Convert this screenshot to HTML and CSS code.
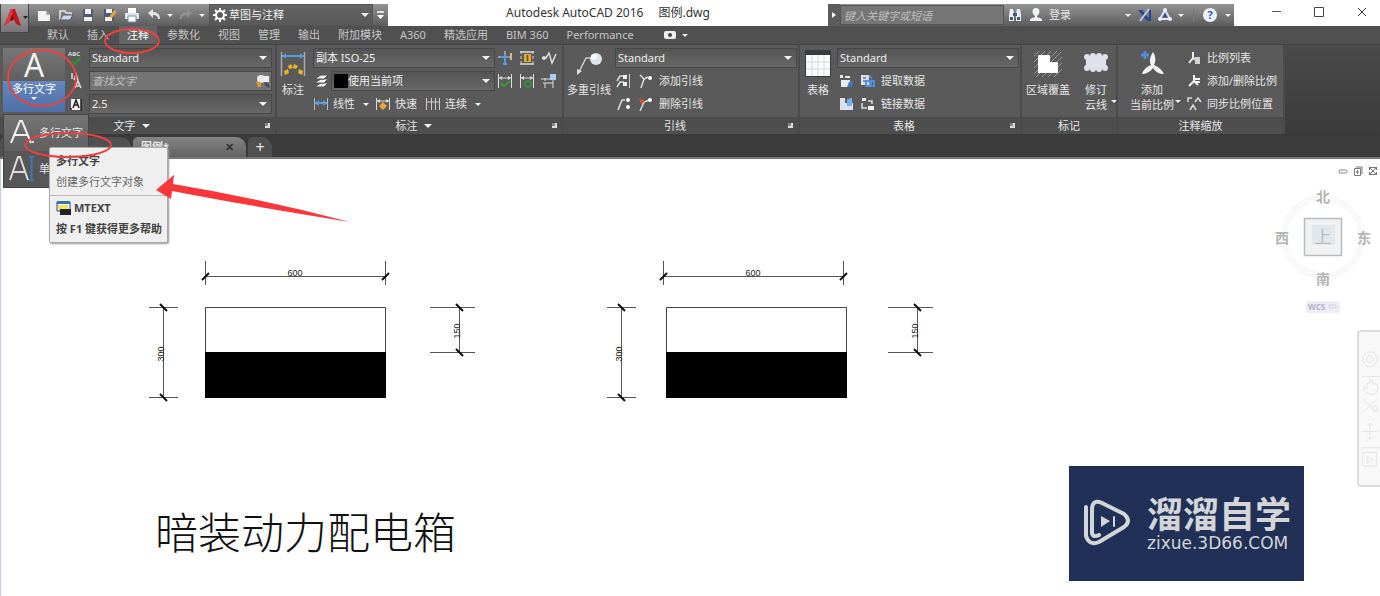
FILE: index.html
```html
<!DOCTYPE html>
<html lang="zh-CN">
<head>
<meta charset="utf-8">
<title>Autodesk AutoCAD 2016 图例.dwg</title>
<link rel="stylesheet" href="styles.css">
</head>
<body>
<div class="app">
  <header class="titlebar">
    <button class="app-button" aria-label="应用程序菜单">
      <svg width="28" height="30" viewBox="0 0 28 30"><path d="M3 22 10 5h4l6 17-5-2-2-4-6 2z" fill="#c4161c"/><path d="M3 22 10 5h2l-1 9-2 4z" fill="#e5343a"/><path d="M11 10l2 5-4 2z" fill="#7d0d12"/><path d="M22 12h5l-2.500 3z" fill="#222"/></svg>
    </button>
    <div class="quick">
      <button class="qi" aria-label="新建"><svg width="16" height="16" viewBox="0 0 16 16"><path d="M2 4h8l4 4v6H2z" fill="#f4f4f4"/><path d="M10 4v4h4z" fill="#aaa"/></svg></button>
      <button class="qi" aria-label="打开"><svg width="16" height="16" viewBox="0 0 16 16"><path d="M2 13V4h5l1 2h5v2" fill="none" stroke="#e8e8e8" stroke-width="1.500"/><path d="M2 13l3-5h10l-3 5z" fill="#cfd8e2" stroke="#46597a"/></svg></button>
      <button class="qi" aria-label="保存"><svg width="16" height="16" viewBox="0 0 16 16"><path d="M3 2h10v12H3z" fill="#4d5c74"/><path d="M5 2h6v5H5zM4 10h8v4H4z" fill="#f2f2f2"/></svg></button>
      <button class="qi" aria-label="另存为"><svg width="16" height="16" viewBox="0 0 16 16"><path d="M2 2h10v12H2z" fill="#4d5c74"/><path d="M4 2h6v4H4zM3 10h7v4H3z" fill="#f2f2f2"/><path d="M7 10l5-7 3 2-5 6z" fill="#e2a23a"/></svg></button>
      <button class="qi" aria-label="打印"><svg width="16" height="16" viewBox="0 0 16 16"><path d="M4 1h8v5H4z" fill="#fff"/><path d="M1 6h14v6H1z" fill="#dfe5ec"/><path d="M4 9h8v6H4z" fill="#fff" stroke="#7790ac"/></svg></button>
      <button class="qi" aria-label="放弃"><svg width="16" height="16" viewBox="0 0 16 16"><path d="M2 6l5-4v3c4 0 7 2 7 7h-2c0-3-2-4-5-4v3z" fill="#e4e4e4"/></svg></button>
      <i class="tri small"></i>
      <button class="qi" aria-label="重做"><svg width="16" height="16" viewBox="0 0 16 16"><path d="M14 6 9 2v3c-4 0-7 2-7 7h2c0-3 2-4 5-4v3z" fill="#909090"/></svg></button>
      <i class="tri small"></i>
    </div>
    <div class="workspace">
      <svg width="14" height="14" viewBox="0 0 14 14"><circle cx="7" cy="7" r="4" fill="none" stroke="#fff" stroke-width="2"/><path d="M7 0v3M7 11v3M0 7h3M11 7h3M2 2l2 2M10 10l2 2M12 2l-2 2M4 10l-2 2" stroke="#fff" stroke-width="2"/></svg>
      <select aria-label="工作空间"><option>草图与注释</option></select><i class="tri"></i>
    </div>
    <button class="customize" aria-label="自定义快速访问工具栏"><svg width="9" height="9" viewBox="0 0 9 9"><path d="M1 1h7" stroke="#fff" stroke-width="1.500"/><path d="M1 4h7L4.500 8z" fill="#fff"/></svg></button>
    <h1 class="doc-title"><span>Autodesk AutoCAD 2016</span><span>图例.dwg</span></h1>
    <div class="info">
      <button class="info-toggle" aria-label="折叠"><i class="tri right"></i></button>
      <input type="search" aria-label="搜索" placeholder="键入关键字或短语">
      <button class="qi" aria-label="查找"><svg width="16" height="16" viewBox="0 0 16 16"><path d="M3 2h3l1 4v8H2V8zM10 2h3l1 6v6H9V6z" fill="#e8edf0"/><path d="M6 6h4v3H6z" fill="#46597a"/><path d="M3 10h3v3H3zM10 10h3v3h-3z" fill="#46597a"/></svg></button>
      <button class="login"><svg width="14" height="16" viewBox="0 0 14 16"><path d="M7 1c5 0 4 6 1 8v1l5 2v2H1v-2l5-2V9C3 7 2 1 7 1z" fill="#eef1f6"/></svg>登录</button>
      <div class="info-tools">
        <i class="tri small"></i>
        <button class="qi" aria-label="Exchange"><svg width="16" height="16" viewBox="0 0 16 16"><path d="M2 3h4l8 10h-4z" fill="#26478e"/><path d="M13 2l-9 12" stroke="#b8c9ee" stroke-width="2"/><path d="M14 3v10h-3" fill="none" stroke="#26478e" stroke-width="2"/></svg></button>
        <button class="qi" aria-label="A360"><svg width="16" height="16" viewBox="0 0 16 16"><path d="M8 3 3 12h10z" fill="none" stroke="#dce5f5" stroke-width="2"/><path d="M8 6l-2 4h4z" fill="#314f8d"/><circle cx="8" cy="3" r="2" fill="#e8effb"/><circle cx="3" cy="12" r="2" fill="#e8effb"/><circle cx="13" cy="12" r="2" fill="#e8effb"/></svg></button>
        <i class="tri small"></i><i class="bar"></i>
        <button class="help" aria-label="帮助">?</button>
        <i class="tri small"></i>
      </div>
    </div>
    <div class="window-controls">
      <button aria-label="最小化"><svg width="12" height="12" viewBox="0 0 12 12"><path d="M2 5.500h9" stroke="#555"/></svg></button>
      <button aria-label="最大化"><svg width="12" height="12" viewBox="0 0 12 12"><path d="M1.500 1.500h9v9h-9z" fill="none" stroke="#444"/></svg></button>
      <button aria-label="关闭"><svg width="12" height="12" viewBox="0 0 12 12"><path d="M2 2l8 8M10 2l-8 8" stroke="#333"/></svg></button>
    </div>
  </header>

  <nav class="tabs">
    <a href="#">默认</a><a href="#">插入</a><a href="#" class="active">注释</a><a href="#">参数化</a><a href="#">视图</a><a href="#">管理</a><a href="#">输出</a><a href="#">附加模块</a><a href="#">A360</a><a href="#">精选应用</a><a href="#">BIM 360</a><a href="#">Performance</a>
    <button class="tab-extra" aria-label="最小化功能区"><svg width="12" height="8" viewBox="0 0 12 8"><rect width="12" height="8" rx="2" fill="#eee"/><circle cx="6" cy="4" r="2" fill="#444"/></svg><i class="tri small"></i></button>
  </nav>

  <main class="ribbon">
    <section class="panel p-text">
      <div class="panel-body">
        <div class="split">
          <button class="split-main" aria-label="多行文字">A</button>
          <button class="split-drop">多行文字<i class="tri small"></i></button>
        </div>
        <div class="rows">
          <div class="row"><span class="icon-cell"><svg width="18" height="18" viewBox="0 0 18 18"><text x="1" y="7" class="abc">ABC</text><path d="M5 12l3 3 6-7" fill="none" stroke="#2c9130" stroke-width="2"/></svg></span>
            <div class="field"><select aria-label="文字样式"><option>Standard</option></select><i class="tri"></i></div></div>
          <div class="row"><span class="icon-cell"><svg width="18" height="18" viewBox="0 0 18 18"><path d="M7 8l2-6 2 6M8 6h3M8 16l3-7 3 7M9 14h4M5 1v6" fill="none" stroke="#ddd" stroke-width="1.500"/></svg></span>
            <div class="field find"><input aria-label="查找文字" placeholder="查找文字"><svg width="16" height="16" viewBox="0 0 16 16"><circle cx="6" cy="6" r="4" fill="#e9e9e9"/><path d="M1 9h5v5H3z" fill="#e19a35"/><path d="M9 3h5v6H9z" fill="#eee"/><path d="M10 10l4 4" stroke="#3f4d60" stroke-width="3"/></svg></div></div>
          <div class="row"><span class="icon-cell"><svg width="18" height="18" viewBox="0 0 18 18"><path d="M4 4h10v11H4z" fill="#f2f2f2"/><path d="M6 13l3-8 3 8M7 10h4M3 14h2M14 4v12" fill="none" stroke="#222" stroke-width="1.500"/></svg></span>
            <div class="field"><select aria-label="文字高度"><option>2.5</option></select><i class="tri"></i></div></div>
        </div>
      </div>
      <footer class="panel-title has-launch"><span>文字</span><i class="tri"></i><button class="launch" aria-label="文字设置"></button></footer>
    </section>

    <section class="panel p-dim">
      <div class="panel-body">
        <button class="big"><svg width="28" height="30" viewBox="0 0 28 30"><path d="M2.500 4v24M25.500 4v24" stroke="#aaa" stroke-width="1.500"/><path d="M3 8h22" stroke="#5a9be0" stroke-width="2"/><path d="M3 8l4-3v6zM25 8l-4-3v6z" fill="#5a9be0"/><g fill="#f0b429"><path d="M5 23l4-2 1 4-4 2zM9 18l3-2 2 4-4 1zM15 16l4 2-2 3-3-1zM20 21l4 2-1 4-4-2z"/></g></svg>标注</button>
        <div class="rows">
          <div class="row"><div class="field w-full"><select aria-label="标注样式"><option>副本 ISO-25</option></select><i class="tri"></i></div>
            <div class="trio">
              <button aria-label="打断"><svg width="16" height="16" viewBox="0 0 16 16"><path d="M1 7h14M8 1v5" stroke="#ddd"/><path d="M8 4v11M3 7h9M6 14h4" stroke="#5a9be0" stroke-width="2"/><path d="M14 3v7" stroke="#d8b98a" stroke-width="2"/></svg></button>
              <button aria-label="调整间距"><svg width="16" height="16" viewBox="0 0 16 16"><path d="M1 2h14M1 14h14" stroke="#ddd" stroke-width="1.500"/><path d="M2 1v14M14 1v14" stroke="#ccc" stroke-dasharray="3 2"/><path d="M5 4h7v8H5z" fill="#e3a82d"/><path d="M8.500 5v6" stroke="#553" stroke-width="1.500"/></svg></button>
              <button aria-label="折弯"><svg width="16" height="16" viewBox="0 0 16 16"><path d="M1 8h4l3-5 3 10 4-9" fill="none" stroke="#ddd" stroke-width="1.500"/><circle cx="3" cy="8" r="2" fill="#ddd"/></svg></button>
            </div></div>
          <div class="row"><span class="icon-cell"><svg width="16" height="16" viewBox="0 0 16 16"><g fill="#f2f2f2" stroke="#555"><path d="M2 13l5-3h7l-4 4H2z"/><path d="M2 9l5-3h7l-4 4H2z"/><path d="M2 5l5-3h7l-4 4H2z"/></g></svg></span>
            <div class="field swatch-field"><span class="swatch"></span><select aria-label="标注图层"><option>使用当前项</option></select><i class="tri"></i></div>
            <div class="trio">
              <button aria-label="检验"><svg width="16" height="16" viewBox="0 0 16 16"><path d="M1.500 1v14M14.500 1v14M2 5h12" stroke="#ddd"/><path d="M2 5l3-2v4zM14 5l-3-2v4z" fill="#ddd"/><path d="M4 10l3 3 6-5" fill="none" stroke="#3b9a30" stroke-width="2"/></svg></button>
              <button aria-label="更新"><svg width="16" height="16" viewBox="0 0 16 16"><path d="M1.500 1v14M14.500 1v14M2 5h12" stroke="#ddd"/><path d="M2 5l3-2v4zM14 5l-3-2v4z" fill="#ddd"/><circle cx="9" cy="11" r="3" fill="none" stroke="#3b8a30" stroke-width="2"/></svg></button>
              <button aria-label="重新关联"><svg width="16" height="16" viewBox="0 0 16 16"><path d="M0 6h9M2 10h10M4 5v3M12 7v8M4 10v5" stroke="#ddd"/><path d="M9 1h6v6H9z" fill="#aacdf5"/></svg></button>
            </div></div>
          <div class="row dims">
            <button><svg width="16" height="16" viewBox="0 0 16 16"><path d="M1.500 2v12M14.500 2v12" stroke="#bbb"/><path d="M2 7h12" stroke="#5a9be0" stroke-width="2"/><path d="M2 7l4-3v6zM14 7l-4-3v6z" fill="#5a9be0"/></svg>线性</button><i class="tri small"></i>
            <button class="quickdim"><svg width="16" height="16" viewBox="0 0 16 16"><path d="M1.500 2v12M14.500 2v12M2 5h12" stroke="#ddd"/><path d="M2 5l3-2v4zM14 5l-3-2v4z" fill="#ddd"/><path d="M8 6l4 4-4 4-4-4z" fill="#eda53a"/></svg>快速</button>
            <button class="contdim"><svg width="16" height="16" viewBox="0 0 16 16"><path d="M1.500 2v12M6.500 2v12M14.500 2v12M10.500 2v12M2 6h13" stroke="#ccc"/></svg>连续</button><i class="tri small"></i>
          </div>
        </div>
      </div>
      <footer class="panel-title has-launch"><span>标注</span><i class="tri"></i><button class="launch" aria-label="标注设置"></button></footer>
    </section>

    <section class="panel p-leader">
      <div class="panel-body">
        <button class="big"><svg width="32" height="30" viewBox="0 0 32 30"><path d="M6 24l7-14h8" fill="none" stroke="#ccc" stroke-width="1.500"/><path d="M4 27v-6l5 2z" fill="#ddd"/><circle cx="23" cy="11" r="6" fill="#dde4ee"/><circle cx="21" cy="9" r="3" fill="#f6f8fb"/></svg>多重引线</button>
        <div class="rows">
          <div class="row"><div class="field w-full"><select aria-label="多重引线样式"><option>Standard</option></select><i class="tri"></i></div></div>
          <div class="row pair"><button aria-label="对齐"><svg width="18" height="16" viewBox="0 0 18 16"><path d="M2 8l3-5h4M2 14l3-5h4" fill="none" stroke="#ddd" stroke-width="1.500"/><path d="M8 2h4v4H8zM8 9h4v4H8z" fill="#eee"/><path d="M14.500 1v14" stroke="#ccc"/></svg></button><button><svg width="16" height="16" viewBox="0 0 16 16"><path d="M3 15l3-9 4-2M2 2l4 4" fill="none" stroke="#ddd" stroke-width="1.500"/><circle cx="12" cy="5" r="2" fill="#fff"/></svg>添加引线</button></div>
          <div class="row pair"><button aria-label="合并"><svg width="18" height="16" viewBox="0 0 18 16"><path d="M3 14l4-10h3" fill="none" stroke="#ddd" stroke-width="1.500"/><circle cx="13" cy="4" r="2" fill="#fff"/><circle cx="13" cy="11" r="2" fill="#fff"/></svg></button><button><svg width="16" height="16" viewBox="0 0 16 16"><path d="M2 15l4-9 5-2" fill="none" stroke="#ddd" stroke-width="1.500"/><path d="M1 2l6 3-4 3z" fill="#d9532c"/><circle cx="12" cy="4" r="2" fill="#fff"/></svg>删除引线</button></div>
        </div>
      </div>
      <footer class="panel-title has-launch"><span>引线</span><button class="launch" aria-label="引线设置"></button></footer>
    </section>

    <section class="panel p-table">
      <div class="panel-body">
        <button class="big"><svg width="28" height="30" viewBox="0 0 28 30"><path d="M1 2h26v27H1z" fill="#383c42"/><path d="M2 7h24v21H2z" fill="#fafafa"/><path d="M2 14h24M2 21h24M8 7v21M14 7v21M20 7v21" stroke="#d5dae0"/></svg>表格</button>
        <div class="rows">
          <div class="row"><div class="field w-full"><select aria-label="表格样式"><option>Standard</option></select><i class="tri"></i></div></div>
          <div class="row pair"><button aria-label="下载"><svg width="18" height="16" viewBox="0 0 18 16"><path d="M3 2h3v3H3zM4 7h9v7H4zM8 3h5v2H8z" fill="#e6e9ed"/><path d="M10 14l2-5 4-1-1 6z" fill="#3c79c8"/></svg></button><button><svg width="16" height="16" viewBox="0 0 16 16"><path d="M1 2h8v10H1z" fill="#d8e0ea"/><path d="M3 5h3M3 8h3" stroke="#345"/><path d="M9 2l3 4M6 8h4v5H6zM11 8h3v5h-3z" fill="none" stroke="#4f8fe0" stroke-width="2"/></svg>提取数据</button></div>
          <div class="row pair"><button aria-label="上载"><svg width="18" height="16" viewBox="0 0 18 16"><path d="M3 2h5v5h8v7H3z" fill="#dce2e8"/><path d="M10 3l5-1v8h-5z" fill="#75adf0"/></svg></button><button><svg width="16" height="16" viewBox="0 0 16 16"><path d="M2 2h4v3H2zM8 10h6v4H8z" fill="#eee"/><path d="M2 7v5h5M8 5h4v3" fill="none" stroke="#ddd" stroke-width="1.500"/></svg>链接数据</button></div>
        </div>
      </div>
      <footer class="panel-title has-launch"><span>表格</span><button class="launch" aria-label="表格设置"></button></footer>
    </section>

    <section class="panel p-mark">
      <div class="panel-body">
        <button class="big"><svg width="32" height="30" viewBox="0 0 32 30"><path d="M2 8l5-5M2 14L13 3M2 20L19 3M2 26L25 3M4 29L29 4M10 29L30 9M16 29l14-14M22 29l8-8" stroke="#999"/><path d="M6 7h12v7h8v11H6z" fill="#fff"/></svg>区域覆盖</button>
        <button class="big"><svg width="28" height="30" viewBox="0 0 28 30"><g fill="#dfe2ea"><path d="M4 9h20v11H4z"/><circle cx="5" cy="9" r="3"/><circle cx="11" cy="8" r="3"/><circle cx="17" cy="8" r="3"/><circle cx="23" cy="9" r="3"/><circle cx="5" cy="20" r="3"/><circle cx="11" cy="21" r="3"/><circle cx="17" cy="21" r="3"/><circle cx="23" cy="20" r="3"/></g></svg>修订<br>云线<i class="tri small corner"></i></button>
      </div>
      <footer class="panel-title"><span>标记</span></footer>
    </section>

    <section class="panel p-scale">
      <div class="panel-body">
        <button class="big"><svg width="32" height="30" viewBox="0 0 32 30"><path d="M17 4c3 5 3 9 1 13 5 2 8 5 10 9-5 0-8-2-11-6-3 4-7 6-11 6 1-4 4-7 9-9-2-4-1-8 2-13z" fill="#f1f3f5"/><path d="M9 3v8M5 7h8" stroke="#4b8de0" stroke-width="3"/></svg>添加<br>当前比例<i class="tri small corner"></i></button>
        <div class="rows">
          <div class="row"><button><svg width="16" height="16" viewBox="0 0 16 16"><path d="M6 2v6l-4 5M6 8l4 3" fill="none" stroke="#eee" stroke-width="2"/><path d="M8 7h5v7H8z" fill="#cfd3d8"/></svg>比例列表</button></div>
          <div class="row"><button><svg width="16" height="16" viewBox="0 0 16 16"><path d="M7 2v6l-5 5M7 8l4 4" fill="none" stroke="#eee" stroke-width="2"/><path d="M8 6h5M8 9h5" stroke="#fff" stroke-width="2"/></svg>添加/删除比例</button></div>
          <div class="row"><button><svg width="16" height="16" viewBox="0 0 16 16"><path d="M1 6V2h4M8 6l3-4 3 4M3 14l3-5 3 5" fill="none" stroke="#ddd" stroke-width="1.500"/></svg>同步比例位置</button></div>
        </div>
      </div>
      <footer class="panel-title"><span>注释缩放</span></footer>
    </section>
    <div class="ribbon-rest"></div>
  </main>

  <div class="doc-tabs">
    <span class="doc-tab start"></span>
    <a href="#" class="doc-tab current"><span>图例*</span><span class="x">✕</span></a>
    <button class="doc-tab add" aria-label="新图形">+</button>
  </div>

  <div class="canvas">
    <svg class="drawing" width="960" height="160" viewBox="0 0 960 160" aria-label="配电箱图例">
      <defs>
        <g id="dims">
          <g fill="none" stroke="#555">
            <path d="M65.500 11v24M245.500 11v24M65 26.500h181M9 57.500h29M9 147.500h29M23.500 57v91M290 57.500h45M290 102.500h45M319.500 57v46"/>
          </g>
          <path d="M62 30l7-7M242 30l7-7M20 54l7 7M20 144l7 7M316 54l7 7M316 99l7 7" stroke="#111" stroke-width="2"/>
          <g class="dim-text"><text x="155" y="26">600</text><text transform="translate(24 104) rotate(-90)">300</text><text transform="translate(320 81) rotate(-90)">150</text></g>
        </g>
        <g id="box"><path d="M65.500 57.500h180v90h-180z" fill="none" stroke="#444"/><path d="M65 102h181v46H65z"/></g>
      </defs>
      <use href="#dims"/><use href="#box"/>
      <use href="#dims" x="458"/><use href="#box" x="461"/>
    </svg>
    <p class="caption">暗装动力配电箱</p>

    <div class="doc-controls">
      <button aria-label="最小化"><svg width="10" height="10" viewBox="0 0 10 10"><rect x="1" y="4" width="8" height="3" rx="1" fill="none" stroke="#888"/></svg></button>
      <button aria-label="还原"><svg width="10" height="10" viewBox="0 0 10 10"><path d="M1.500 2.500h6v7h-6zM3 1h6v7M3 6h3M4.500 4v4" fill="none" stroke="#777"/></svg></button>
      <button aria-label="关闭"><svg width="10" height="10" viewBox="0 0 10 10"><path d="M1 1.500h8M1 8.500h8M2 2l6 6M8 2L2 8M1.500 1v3M8.500 1v3M1.500 6v3M8.500 6v3" fill="none" stroke="#777"/></svg></button>
    </div>
    <svg class="viewcube" width="104" height="130" viewBox="0 0 104 130">
      <circle cx="52" cy="51" r="39" fill="none" stroke="#f9f9f9" stroke-width="7"/>
      <path d="M33.500 32.500h37v37h-37z" fill="#eff1f2" stroke="#bbb" stroke-width="1.500"/>
      <path d="M41 39h23v20H41z" fill="#e2e7ec"/>
      <g class="cube-text"><text x="52" y="16">北</text><text x="11" y="57">西</text><text x="93" y="57">东</text><text x="52" y="98">南</text></g>
      <text x="52" y="57" class="cube-face">上</text>
      <rect x="35" y="115" width="34" height="12" rx="3" fill="#eeecf6"/>
      <text x="37" y="124" class="wcs">WCS</text>
      <path d="M58 119h7v3h-7z" fill="none" stroke="#d5d2e2"/>
    </svg>
    <div class="navbar">
      <svg width="21" height="153" viewBox="0 0 23 156" fill="none" stroke="#e2e2e2"><circle cx="12" cy="24" r="8"/><circle cx="12" cy="24" r="4"/><path d="M3 43h20M7 60c-4-6 0-7 2-4v-6h3v-3h3v4h4c3 5 1 12-4 12z"/><path d="M4 68l16 14M20 68L4 82"/><circle cx="17" cy="78" r="3"/><path d="M12 94v18M3 103h18M9 97l3-3 3 3M9 109l3 3 3-3M3 121h20M4 126h15v15H4zM9 130l6 4-6 4z"/></svg>
    </div>
    <div class="brand">
      <svg width="50" height="54" viewBox="0 0 50 54" fill="none" stroke="#d3d5d8" stroke-width="4" stroke-linecap="round"><path d="M5 10v29q3 10 13 6l25-15q8-6 0-13L21 6Q12 2 11 11v25q1 5 7 2"/><path d="M20 19v11l9-6z" fill="#d3d5d8" stroke="none"/><path d="M33 20v9" stroke-width="2"/></svg>
      <div><strong>溜溜自学</strong><span>zixue.3D66.COM</span></div>
    </div>
  </div>

  <div class="flyout">
    <button class="hover"><svg width="32" height="32" viewBox="0 0 32 32"><path d="M5 26 14 4h2l9 22M8 18h14" fill="none" stroke="#f0f0f0" stroke-width="2"/><circle cx="27" cy="25" r="1" fill="#fff"/></svg>多行文字</button>
    <button><svg width="32" height="32" viewBox="0 0 32 32"><path d="M4 27 12 4h2l8 23M7 19h12" fill="none" stroke="#ddd" stroke-width="2"/><path d="M23 4h5M25.500 4v23M23 27h5" stroke="#3f78b8" stroke-width="2"/></svg>单行文字</button>
  </div>
  <div class="tooltip" role="tooltip">
    <strong>多行文字</strong>
    <p>创建多行文字对象</p>
    <hr>
    <div class="cmd"><svg width="16" height="14" viewBox="0 0 16 14"><path d="M1 1h13v9H1z" fill="#fff" stroke="#339"/><path d="M1 0h13v3H1z" fill="#37a"/><path d="M2 4h10v4H2z" fill="#f1e94c"/><path d="M4 8h11v6H4z" fill="#222"/></svg>MTEXT</div>
    <strong class="f1">按 F1 键获得更多帮助</strong>
  </div>
  <svg class="marks" width="360" height="230" viewBox="0 0 360 230" aria-hidden="true">
    <g fill="none" stroke="#ea4240" stroke-width="2"><ellipse cx="132" cy="41" rx="27" ry="12"/><ellipse cx="42" cy="78" rx="34" ry="28"/><ellipse cx="68" cy="145" rx="43" ry="12"/></g>
    <path d="M156 190l18-15-1 9q90 15 177 38-100-16-178-31l-1 8z" fill="#f9373a"/>
  </svg>
</div>
</body>
</html>
```
FILE: styles.css
```css
* { box-sizing: border-box; }
body {
  margin: 0;
  background: #fff;
  color: #e6e6e6;
  font: 11px/16px "Noto Sans", "Noto Sans CJK SC", sans-serif;
}
button, input, select {
  margin: 0;
  padding: 0;
  border: 0;
  border-radius: 0;
  background: none;
  color: inherit;
  font: inherit;
}
select { appearance: none; flex: 1; min-width: 0; height: 100%; }
input { min-width: 0; }
svg { display: block; flex: none; }
a { color: inherit; text-decoration: none; }
.app {
  position: relative;
  display: flex;
  flex-direction: column;
  min-height: 100vh;
  overflow: hidden;
}

/* Small arrows */
.tri {
  flex: none;
  border: 4px solid transparent;
  border-top-color: #f2f2f2;
  border-bottom: 0;
  pointer-events: none;
}
.tri.small { border-width: 3px; border-bottom: 0; }
.tri.right { border: 3px solid transparent; border-left: 4px solid #fff; border-right: 0; }

/* Title bar */
.titlebar { display: flex; height: 26px; padding-top: 4px; }
.quick, .workspace, .customize, .info { background: linear-gradient(#949494, #5c5c5c); }
.app-button {
  position: absolute;
  top: 4px;
  left: 0;
  z-index: 2;
  border: 1px solid #444;
  border-top: 0;
  background: linear-gradient(#aaa, #767676);
  overflow: hidden;
  width: 29px;
  height: 29px;
}
.quick { display: flex; align-items: center; gap: 6px; width: 209px; padding-left: 36px; }
.qi { flex: none; }
.quick .tri { margin: 0 -1px; }
.workspace {
  display: flex;
  align-items: center;
  gap: 2px;
  width: 164px;
  padding: 0 3px;
  border: 1px solid #555;
  background: linear-gradient(#646464, #585858);
  color: #f2f2f2;
}
.customize { display: grid; place-items: center; width: 15px; }
.doc-title {
  display: flex;
  flex: 1;
  justify-content: center;
  gap: 15px;
  margin: 0;
  color: #333;
  font-size: 12px;
  font-weight: 400;
  line-height: 18px;
}
.info { display: flex; align-items: center; width: 406px; }
.info-toggle { display: grid; place-items: center; width: 12px; height: 100%; background: #5c5c5c; }
.info input {
  width: 164px;
  height: 20px;
  margin-right: 3px;
  padding: 0 3px;
  border: 1px solid #555;
  background: #757575;
  font-style: italic;
}
input::placeholder { color: #bdbdbd; opacity: 1; }
.login { display: flex; align-items: center; gap: 6px; margin-left: 6px; }
.info-tools { display: flex; flex: 1; align-items: center; justify-content: flex-end; gap: 5px; padding-right: 3px; }
.bar { width: 1px; height: 14px; margin: 0 4px; background: #777; }
.help {
  width: 14px;
  height: 14px;
  margin-right: 3px;
  border-radius: 50%;
  background: #eef3fb;
  color: #2b5cab;
  font-weight: 700;
  line-height: 14px;
}
.window-controls { display: flex; justify-content: space-between; width: 146px; padding: 2px 12px 8px 36px; }

/* Ribbon tabs */
.tabs {
  display: flex;
  align-items: stretch;
  gap: 2px;
  height: 18px;
  padding-left: 39px;
  background: #505050;
  color: #c6c6c6;
  line-height: 18px;
}
.tabs a { padding: 0 8px; }
.tabs .active { background: #656565; color: #fff; }
.tab-extra { display: flex; align-items: center; gap: 6px; margin-left: 20px; }

/* Ribbon panels */
.ribbon { display: flex; height: 90px; border-top: 1px solid #444; background: #3d3d3d; }
.panel { display: flex; flex: none; flex-direction: column; border-right: 2px solid #4b4b4b; background: #5a5a5a; }
.panel-body { display: flex; flex: 1; padding: 3px 3px 0; }
.panel-title {
  display: flex;
  align-items: center;
  justify-content: center;
  gap: 6px;
  position: relative;
  height: 17px;
  background: linear-gradient(#4b4b4b, #505050);
}
.has-launch { padding-right: 12px; }
.ribbon-rest { flex: 1; background: linear-gradient(#4a4a4a, #3b3b3b); }
.p-text { width: 277px; }
.p-dim { width: 287px; }
.p-leader { width: 236px; }
.p-table { width: 222px; }
.p-mark { width: 96px; }
.p-scale { width: 167px; }
.launch {
  position: absolute;
  right: 5px;
  width: 5px;
  height: 5px;
  border: solid #ddd;
  border-width: 0 2px 2px 0;
  background: #888;
}
.rows { display: flex; flex: 1; flex-direction: column; gap: 3px; min-width: 0; }
.row { display: flex; align-items: center; height: 20px; }
.row button { display: flex; align-items: center; gap: 4px; white-space: nowrap; }
.icon-cell { display: grid; place-items: center; flex: none; width: 18px; }
.field {
  display: flex;
  flex: 1;
  align-items: center;
  min-width: 0;
  height: 20px;
  padding: 0 4px 0 2px;
  border: 1px solid #484848;
  background: linear-gradient(#545454, #686868);
  color: #eee;
}
.p-text .icon-cell { margin: 0 4px 0 2px; }
.field input { flex: 1; font-style: italic; }
.find { padding-right: 0; background: #747474; }
.split { display: flex; flex-direction: column; width: 62px; height: 64px; }
.split-main {
  height: 33px;
  background: linear-gradient(#777, #606060);
  color: #f5f5f5;
  font-family: "Open Sans", sans-serif;
  font-size: 32px;
  font-weight: 400;
  line-height: 33px;
}
.split-drop {
  display: flex;
  flex: 1;
  flex-direction: column;
  align-items: center;
  background: linear-gradient(#6687bd, #4d70aa);
  color: #fff;
}
.abc { fill: #ddd; font-size: 6px; font-weight: 700; }
.big {
  display: flex;
  position: relative;
  flex: none;
  flex-direction: column;
  align-items: center;
  line-height: 15px;
  white-space: nowrap;
}
.big svg { margin-bottom: 4px; }
.corner { position: absolute; right: -7px; bottom: 14px; }
.p-dim .big { width: 26px; margin-right: 7px; }
.w-full { flex: none; width: 182px; }
.swatch-field { flex: none; width: 164px; }
.swatch { width: 14px; height: 14px; background: #000; }
.trio { display: flex; gap: 6px; margin-left: 2px; }
.dims .tri { margin-left: 8px; }
.dims .quickdim { margin-left: 6px; }
.dims .contdim { margin-left: 8px; }
.p-leader .big { width: 44px; margin-right: 4px; }
.p-table .big { width: 30px; margin-right: 4px; }
.row.pair { gap: 5px; }
.row.pair button { gap: 5px; }
.p-mark .panel-body { gap: 12px; padding-left: 4px; }
.p-scale .panel-body { padding-left: 12px; }
.p-scale .rows { margin-left: 13px; }

/* Drawing tabs */
.doc-tabs { display: flex; align-items: flex-end; gap: 2px; height: 25px; border-bottom: 2px solid #777; background: #3b3b3b; }
.doc-tab { display: flex; align-items: center; height: 20px; border-radius: 5px 10px 0 0; background: #505050; }
.doc-tab.start { width: 131px; }
.doc-tab.current {
  justify-content: space-between;
  width: 113px;
  padding: 0 12px 0 8px;
  background: linear-gradient(#858585, #626262);
  font-weight: 700;
}
.x { color: #333; }
.doc-tab.add { justify-content: center; width: 24px; font-size: 16px; }

/* Model space */
.canvas { position: relative; flex: 1; border-left: 1px solid #bcd0e4; background: #fff; }
.drawing { position: absolute; top: 91px; left: 139px; }
.dim-text { fill: #222; font: 9px "Liberation Sans", sans-serif; text-anchor: middle; }
.caption {
  position: absolute;
  top: 341px;
  left: 154px;
  margin: 0;
  color: #111;
  font-family: "Noto Sans CJK SC", sans-serif;
  font-size: 43px;
  font-weight: 300;
  line-height: 60px;
  white-space: nowrap;
}
.doc-controls { display: flex; gap: 5px; position: absolute; top: 7px; right: 2px; }
.viewcube { position: absolute; top: 27px; right: 5px; }
.cube-text { fill: #b5b5b5; font-size: 14px; font-weight: 700; text-anchor: middle; }
.cube-face { fill: #b5bcc2; font-size: 17px; text-anchor: middle; }
.wcs { fill: #b4b0c8; font-size: 8px; font-weight: 700; }
.navbar {
  position: absolute;
  top: 171px;
  right: 0;
  border: 2px solid #ddd;
  border-right: 0;
  border-radius: 4px 0 0 4px;
  background: #f8f8f8;
}
.brand {
  display: flex;
  align-items: center;
  gap: 16px;
  position: absolute;
  right: 76px;
  bottom: 15px;
  width: 235px;
  height: 115px;
  padding-left: 12px;
  background: #213056;
  color: #d3d5d8;
}
.brand div { display: flex; flex-direction: column; }
.brand strong { font-size: 36px; line-height: 38px; }
.brand span { font: 17px/18px "DejaVu Sans", sans-serif; }

/* Flyout, tooltip and highlights */
.flyout {
  position: absolute;
  top: 114px;
  left: 3px;
  width: 86px;
  border: 1px solid #444;
  background: #575757;
}
.flyout button {
  display: flex;
  align-items: center;
  gap: 1px;
  width: 100%;
  height: 36px;
  padding-left: 2px;
  overflow: hidden;
  white-space: nowrap;
}
.flyout .hover { background: linear-gradient(#757575, #606060); }
.tooltip {
  position: absolute;
  top: 147px;
  left: 49px;
  width: 119px;
  padding: 5px 6px;
  border: 1px solid #aaa;
  border-radius: 2px;
  background: #efefef;
  box-shadow: 1px 1px 2px #999;
  color: #444;
  white-space: nowrap;
}
.tooltip strong { display: block; }
.tooltip p { margin: 5px 0; color: #666; }
.tooltip hr { margin: 0 -6px 4px; border: 0; border-top: 1px solid #bbb; }
.cmd { display: flex; align-items: center; gap: 2px; font-weight: 700; }
.tooltip .f1 { margin-top: 5px; }
.marks { position: absolute; top: 0; left: 0; z-index: 3; pointer-events: none; }
```
